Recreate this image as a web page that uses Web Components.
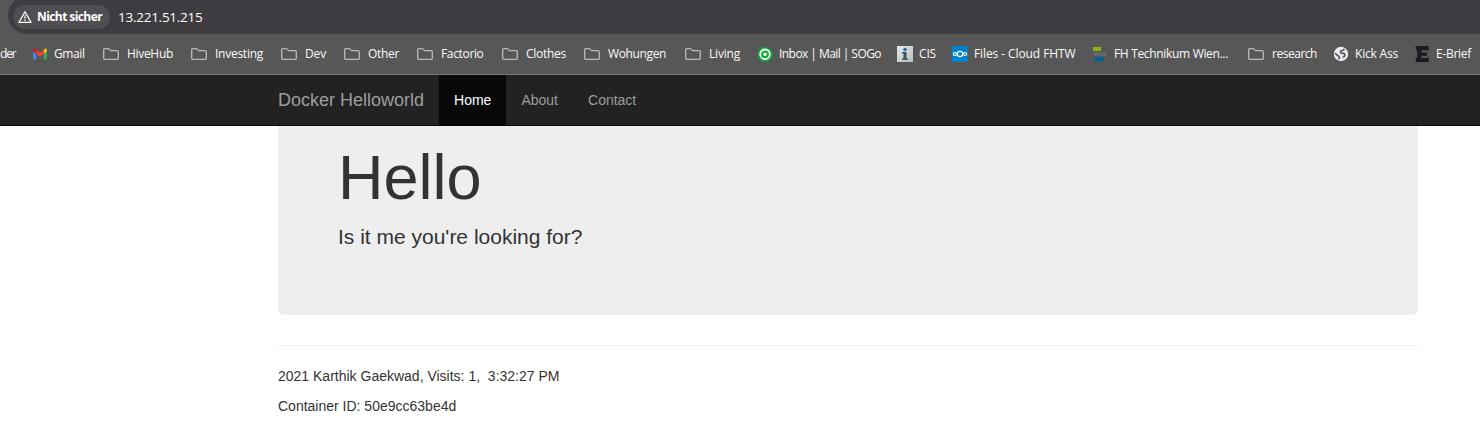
<!DOCTYPE html>
<html lang="de"><head><meta charset="utf-8"><title>Docker Helloworld</title>
<style>html,body{margin:0;background:#fff}body{height:443px;overflow:hidden}</style></head>
<body>
<app-page></app-page>
<script>
const ICONS = {
  folder: '<svg width="16" height="16" viewBox="0 0 16 16"><path d="M.7 12.3V3.7c0-.6.4-1 1-1h3.5c.4 0 .6.1.9.4l1.5 1.6h6.7c.6 0 1 .4 1 1v6.6c0 .6-.4 1-1 1H1.7c-.6 0-1-.4-1-1z" fill="none" stroke="#bababa" stroke-width="1.3"/></svg>',
  gmail: '<svg width="16" height="16" viewBox="0 0 16 16"><path d="M1 4.5v8.2c0 .6.4.9.9.9h2.4V7z" fill="#4285f4"/><path d="M15 4.5v8.2c0 .6-.4.9-.9.9h-2.4V7z" fill="#34a853"/><path d="M11.7 3.8V8L15 5.6V4.3c0-1.6-1.4-2.1-2.4-1.3z" fill="#fbbc04"/><path d="M4.3 8V3.8L8 6.6l3.7-2.8V8L8 10.8z" fill="#ea4335"/><path d="M1 4.3v1.3L4.3 8V3.8L3.4 3C2.4 2.2 1 2.7 1 4.3z" fill="#c5221f"/></svg>',
  sogo: '<svg width="16" height="16" viewBox="0 0 16 16"><circle cx="8" cy="8.3" r="7.4" fill="#0aab38"/><circle cx="8" cy="8.3" r="4.8" fill="none" stroke="#fff" stroke-width="1.8"/><circle cx="8" cy="8.3" r="1.8" fill="#fff"/></svg>',
  info: '<svg width="16" height="16" viewBox="0 0 16 16"><defs><linearGradient id="g" x2="1" y2="1"><stop stop-color="#e5e8e9"/><stop offset="1" stop-color="#b9bfc1"/></linearGradient></defs><path fill="url(#g)" d="M0 0h16v16H0z"/><circle cx="8" cy="3.5" r="1.8" fill="#1673ad"/><path d="M5 6h4.5v6.5H11V14H5v-1.5h1.5v-5H5z" fill="#44525b"/></svg>',
  cloud: '<svg width="16" height="16" viewBox="0 0 16 16"><rect width="16" height="16" rx="1.5" fill="#0082c9"/><g fill="none" stroke="#fff" stroke-width="1.2"><circle cx="8" cy="8" r="2.6"/><circle cx="2.9" cy="8" r="1.5"/><circle cx="13.1" cy="8" r="1.5"/></g></svg>',
  fh: '<svg width="16" height="16" viewBox="0 0 16 16"><path fill="#8cb110" d="M1 1h8v4H1z"/><path fill="#63686a" d="M1 6h13l1 2-1 2H2z"/><path fill="#00649c" d="M3 11h9v4H2z"/></svg>',
  globe: '<svg width="16" height="16" viewBox="0 0 16 16"><circle cx="8" cy="8" r="7.2" fill="#e8eaed"/><path d="M11.2 2.8C11 4.6 9.6 4.3 8.3 4.8 7 5.4 7.3 7 8.6 7.1c2 .1 3.3.2 3.2 2-.1 1.3-1 2-2.2 1.9M2 7.4l3 2.3c1.600.4 1.500 1.500.8 3.600" fill="none" stroke="#55565a" stroke-width="1.7"/></svg>',
  ebrief: '<svg width="16" height="16" viewBox="0 0 16 16"><path fill="#1c1a1f" d="M.5 0h13l.5 5-1.500-.8H6.300v2.300H12v3.300H6.300v2.200h6.200l1.500-.9-.5 4.900H.5l.5-3.600 1.200-.8V4.600L1 3.800z"/></svg>',
  warn: '<svg width="14" height="14" viewBox="0 0 14 14"><path d="M7 1.7 13 12.3H1z" fill="none" stroke="#fff" stroke-width="1.3" stroke-linejoin="round"/><path d="M7 5.2v3.5M7 9.6v1.3" stroke="#fff" stroke-width="1.2"/></svg>'
};

/* Text with a known advance width: the difference is spread as letter spacing. */
class FitText extends HTMLElement {
  connectedCallback() {
    this.attachShadow({mode:'open'}).innerHTML =
      '<style>:host{display:block;white-space:pre;flex:none}span{display:inline-block}</style><span><slot></slot></span>';
    const want = +this.getAttribute('width');
    const span = this.shadowRoot.querySelector('span');
    const n = [...this.textContent].length;
    const have = span.getBoundingClientRect().width;
    span.style.letterSpacing = ((want - have) / n) + 'px';
    this.style.width = want + 'px';
  }
}
customElements.define('fit-text', FitText);

class BookmarkItem extends HTMLElement {
  connectedCallback() {
    const icon = this.getAttribute('icon');
    this.attachShadow({mode:'open'}).innerHTML =
      `<style>:host{display:flex;align-items:center;flex:none;height:20px;margin-right:var(--after,17px)}
      i{display:flex;flex:none;width:16px;height:16px;margin-right:var(--gap,6px)}svg{display:block}</style>
      ${icon ? `<i>${ICONS[icon]}</i>` : ''}<slot></slot>`;
  }
}
customElements.define('bookmark-item', BookmarkItem);

/* label, icon, icon x, label x, label width */
const MARKS = [
  ['der','',null,0,15.5],['Gmail','gmail',32,54,30.5],['HiveHub','folder',103,127,46],['Investing','folder',191,215,48],
  ['Dev','folder',281,305,21],['Other','folder',344,368,31],['Factorio','folder',417,441,42.5],['Clothes','folder',502,526,40],
  ['Wohungen','folder',584,608,58],['Living','folder',685,709,31],['Inbox | Mail | SOGo','sogo',757,779,102],
  ['CIS','info',897,919,17],['Files - Cloud FHTW','cloud',952,974,101.5],['FH Technikum Wien...','fh',1092,1114,114],
  ['research','folder',1248,1272,45],['Kick Ass','globe',1333,1355,43],['E-Brief','ebrief',1415,1436,35]
];
class BookmarksBar extends HTMLElement {
  connectedCallback() {
    this.attachShadow({mode:'open'}).innerHTML =
      `<style>:host{display:flex;align-items:center;box-sizing:border-box;height:41px;padding-bottom:1px;border-bottom:1px solid #777;
      background:#575757;color:#fafafa;font:12px/18px "Open Sans","Noto Sans",sans-serif;overflow:hidden}</style>` +
      MARKS.map(([t,ic,ix,tx,w],i) => {
        const next = MARKS[i+1];
        const after = next ? next[2] - tx - w : 0;
        return `<bookmark-item icon="${ic}" style="--after:${after}px;--gap:${ic ? tx-ix-16 : 0}px"><fit-text width="${w}">${t}</fit-text></bookmark-item>`;
      }).join('');
  }
}
customElements.define('bookmarks-bar', BookmarksBar);

class AddressBar extends HTMLElement {
  connectedCallback() {
    this.attachShadow({mode:'open'}).innerHTML =
      `<style>:host{display:block;height:34px;background:#575757;color:#fff;font:12px/18px "Open Sans","Noto Sans",sans-serif;overflow:hidden}
      .field{display:flex;align-items:center;box-sizing:border-box;height:38px;margin:-4px 0 0 8px;padding:4px 0 0 5px;background:#3e3c40;border-radius:19px 0 0 19px}
      .chip{display:flex;align-items:center;box-sizing:border-box;width:97px;height:24px;padding-left:5px;border-radius:12px;background:#504e52;font-weight:700;flex:none}
      svg{display:block;margin-right:5px}.url{margin-left:8px;font-size:13.5px}</style>
      <div class="field"><div class="chip">${ICONS.warn}<fit-text width="65">Nicht sicher</fit-text></div><fit-text class="url" width="84.5">13.221.51.215</fit-text></div>`;
  }
}
customElements.define('address-bar', AddressBar);

class NavLink extends HTMLElement {
  connectedCallback() {
    this.attachShadow({mode:'open'}).innerHTML =
      `<style>:host{display:block;padding:15px;height:20px;line-height:20px;color:#9d9d9d}:host([active]){background:#080808;color:#fff}</style><slot></slot>`;
  }
}
customElements.define('nav-link', NavLink);

class SiteNav extends HTMLElement {
  connectedCallback() {
    this.attachShadow({mode:'open'}).innerHTML =
      `<style>:host{display:flex;height:50px;padding-left:278px;background:#222;border-bottom:1px solid #080808;font:14px/20px "Liberation Sans",Arial,sans-serif}
      .brand{padding:15px 15px 15px 0;font-size:18px;color:#9d9d9d}</style>
      <div class="brand">Docker Helloworld</div><nav-link active>Home</nav-link><nav-link>About</nav-link><nav-link>Contact</nav-link>`;
  }
}
customElements.define('site-nav', SiteNav);

class HelloHero extends HTMLElement {
  connectedCallback() {
    this.attachShadow({mode:'open'}).innerHTML =
      `<style>:host{display:block;box-sizing:border-box;height:189px;padding:17px 60px 0;background:#eee;border-radius:0 0 6px 6px;color:#333}
      h1{margin:0 0 10px;font-size:63px;font-weight:500;line-height:69px}p{margin:0;font-size:21px;line-height:30px;font-weight:200}
      ::slotted(*){display:inline}</style><h1><slot name="title"></slot></h1><p><slot></slot></p>`;
  }
}
customElements.define('hello-hero', HelloHero);

class AppPage extends HTMLElement {
  connectedCallback() {
    this.attachShadow({mode:'open'}).innerHTML =
      `<style>:host{display:block}main{width:1140px;margin-left:278px;font:14px/20px "Liberation Sans",Arial,sans-serif;color:#333}
      hr{border:0;border-top:1px solid #eee;margin:30px 0 20px}p{margin:0 0 10px;white-space:pre}</style>
      <address-bar></address-bar><bookmarks-bar></bookmarks-bar><site-nav></site-nav>
      <main><hello-hero><span slot="title">Hello</span>Is it me you're looking for?</hello-hero><hr>
      <footer><p>2021 Karthik Gaekwad, Visits: 1,  3:32:27 PM</p><p>Container ID: 50e9cc63be4d</p></footer></main>`;
  }
}
customElements.define('app-page', AppPage);
</script>
</body></html>
